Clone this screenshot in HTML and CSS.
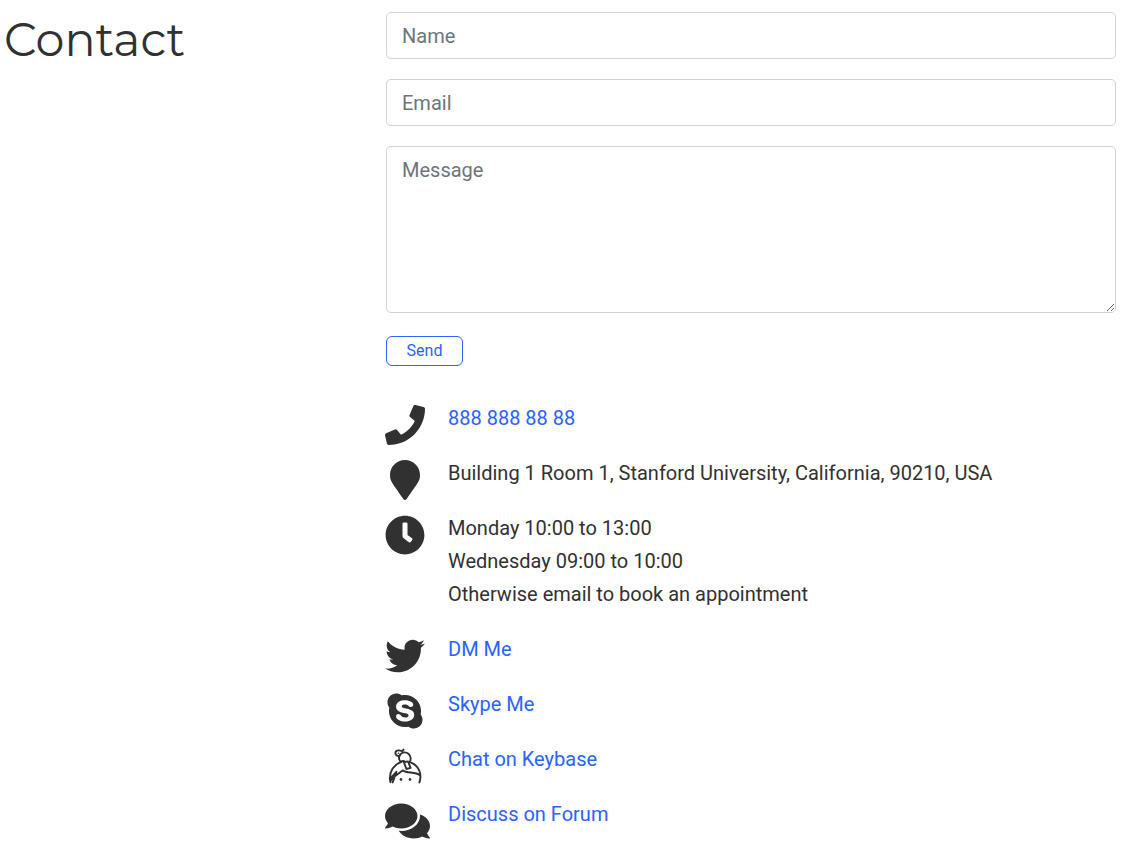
FILE: index.html
```html
<!DOCTYPE html>
<html lang="en">
<head>
<meta charset="utf-8">
<meta name="viewport" content="width=device-width, initial-scale=1">
<title>Contact</title>
<link rel="stylesheet" href="styles.css">
</head>
<body>
<section class="contact">
  <h1 class="contact-title">Contact</h1>
  <div class="contact-body">
    <form class="contact-form">
      <input class="field" type="text" name="name" aria-label="Name" placeholder="Name">
      <input class="field" type="email" name="email" aria-label="Email" placeholder="Email">
      <textarea class="field field-message" name="message" rows="5" aria-label="Message" placeholder="Message"></textarea>
      <button class="send" type="submit">Send</button>
    </form>
    <ul class="details">
      <li class="detail">
        <svg class="icon" viewBox="0 0 512 512" aria-hidden="true"><path d="M493.4 24.6l-104-24c-11.3-2.6-22.9 3.3-27.5 13.9l-48 112c-4.2 9.8-1.4 21.3 6.9 28l60.6 49.6c-36 76.7-98.9 140.5-177.2 177.2l-49.6-60.6c-6.8-8.3-18.2-11.1-28-6.9l-112 48C3.9 366.5-2 378.1.6 389.4l24 104C27.1 504.2 36.7 512 48 512c256.1 0 464-207.5 464-464 0-11.2-7.7-20.9-18.6-23.4z"/></svg>
        <a href="tel:8888888888">888 888 88 88</a>
      </li>
      <li class="detail">
        <svg class="icon" viewBox="-64 0 512 512" aria-hidden="true"><path d="M172.268 501.67C26.97 291.031 0 269.413 0 192 0 85.961 85.961 0 192 0s192 85.961 192 192c0 77.413-26.97 99.031-172.268 309.67-9.535 13.774-29.93 13.773-39.464 0z"/></svg>
        <span>Building 1 Room 1, Stanford University, California, 90210, USA</span>
      </li>
      <li class="detail">
        <svg class="icon" viewBox="0 0 512 512" aria-hidden="true"><path d="M256,8C119,8,8,119,8,256S119,504,256,504,504,393,504,256,393,8,256,8Zm92.49,313h0l-20,25a16,16,0,0,1-22.49,2.5h0l-67-49.72a40,40,0,0,1-15-31.23V112a16,16,0,0,1,16-16h32a16,16,0,0,1,16,16V256l58,42.5A16,16,0,0,1,348.49,321Z"/></svg>
        <span>Monday 10:00 to 13:00<br>Wednesday 09:00 to 10:00<br>Otherwise email to book an appointment</span>
      </li>
      <li class="detail">
        <svg class="icon" viewBox="0 0 512 512" aria-hidden="true"><path d="M459.37 151.716c.325 4.548.325 9.097.325 13.645 0 138.72-105.583 298.558-298.558 298.558-59.452 0-114.68-17.219-161.137-47.106 8.447.974 16.568 1.299 25.34 1.299 49.055 0 94.213-16.568 130.274-44.832-46.132-.975-84.792-31.188-98.112-72.772 6.498.974 12.995 1.624 19.818 1.624 9.421 0 18.843-1.3 27.614-3.573-48.081-9.747-84.143-51.98-84.143-102.985v-1.299c13.969 7.797 30.214 12.67 47.431 13.319-28.264-18.843-46.781-51.005-46.781-87.391 0-19.492 5.197-37.36 14.294-52.954 51.655 63.675 129.3 105.258 216.365 109.807-1.624-7.797-2.599-15.918-2.599-24.04 0-57.828 46.782-104.934 104.934-104.934 30.213 0 57.502 12.67 76.67 33.137 23.715-4.548 46.456-13.32 66.599-25.34-7.798 24.366-24.366 44.833-46.132 57.827 21.117-2.273 41.584-8.122 60.426-16.243-14.292 20.791-32.161 39.308-52.628 54.253z"/></svg>
        <a href="#twitter">DM Me</a>
      </li>
      <li class="detail">
        <svg class="icon" viewBox="-32 0 512 512" aria-hidden="true"><path d="M424.7 299.8c2.9-14 4.7-28.9 4.7-43.8 0-113.5-91.9-205.3-205.3-205.3-14.9 0-29.7 1.7-43.8 4.7C161.3 40.7 137.7 32 112 32 50.2 32 0 82.2 0 144c0 25.7 8.7 49.3 23.3 68.2-2.9 14-4.7 28.9-4.7 43.8 0 113.5 91.9 205.3 205.3 205.3 14.9 0 29.7-1.7 43.8-4.7 19 14.6 42.6 23.3 68.2 23.3 61.8 0 112-50.2 112-112 .1-25.6-8.6-49.2-23.2-68.1zm-194.6 91.5c-65.6 0-120.5-29.2-120.5-65 0-16 9-30.6 29.5-30.6 31.2 0 34.1 44.9 88.1 44.9 25.7 0 42.3-11.4 42.3-26.3 0-18.7-16-21.6-42-28-62.5-15.4-117.8-22-117.8-87.2 0-59.2 58.6-81.1 109.1-81.1 55.1 0 110.8 21.9 110.8 55.4 0 16.9-11.4 31.8-30.3 31.8-28.3 0-29.2-33.5-75-33.5-25.7 0-42 7-42 22.5 0 19.8 20.8 21.8 69.1 33 41.4 9.3 90.7 26.8 90.7 77.6 0 59.1-57.1 86.5-112 86.5z"/></svg>
        <a href="#skype">Skype Me</a>
      </li>
      <li class="detail">
        <svg class="icon" viewBox="0 0 40 40" aria-hidden="true">
          <g fill="none" stroke="currentColor" stroke-width="1.9" stroke-linejoin="round" stroke-linecap="round">
            <path d="M4.9 33C4.6 25 8.8 18.6 15.8 16.2M26 16.6C32.8 19.2 37.6 27 34.4 36.4"/>
            <path d="M4.9 33L11.4 25.8L10.2 30L17.6 24.4C22.5 27.6 30 25.4 35 29.2M4.9 33L5.4 36.2M7.6 36.4L9.4 32"/>
            <path d="M15.8 16.2C13.6 13.6 13.5 10.6 15.3 8.4C17.2 6 21 5.6 23.4 7.8C26.3 10.4 26.3 14.2 24.2 16.6M15.8 16.2C17 15 18.3 14.7 19.6 15.4"/>
            <path d="M18.9 16.2L23 15.4L25.6 21.8L21.4 23Z"/>
            <path d="M14.8 9.6C12.4 10.4 10.4 9.2 10.4 7C10.4 5 12 4.2 14 4.4L17.4 5.2L18.5 3.6"/>
          </g>
          <path d="M5 33L11.4 25.8L10.4 29.4L8.4 33.6L5.6 36Z"/>
          <circle cx="16" cy="33.4" r="1.3"/>
          <circle cx="25" cy="33.4" r="1.3"/>
          <circle cx="13.5" cy="7.2" r="0.8"/>
        </svg>
        <a href="#keybase">Chat on Keybase</a>
      </li>
      <li class="detail">
        <svg class="icon icon-wide" viewBox="0 0 576 512" aria-hidden="true"><path d="M416 192c0-88.4-93.1-160-208-160S0 103.6 0 192c0 34.3 14.1 65.9 38 92-13.4 30.2-35.5 54.2-35.8 54.5-2.2 2.3-2.8 5.7-1.5 8.7S4.8 352 8 352c36.6 0 66.9-12.3 88.7-25 32.2 15.7 70.3 25 111.3 25 114.9 0 208-71.6 208-160zm122 220c23.9-26 38-57.7 38-92 0-66.9-53.5-124.2-129.3-148.1.9 6.6 1.3 13.3 1.3 20.1 0 105.9-107.7 192-240 192-10.8 0-21.3-.8-31.7-1.9C207.8 439.6 281.8 480 368 480c41 0 79.1-9.2 111.3-25 21.8 12.7 52.1 25 88.7 25 3.2 0 6.1-1.9 7.3-4.8 1.3-2.9.7-6.3-1.5-8.7-.3-.2-22.4-24.2-35.8-54.5z"/></svg>
        <a href="#forum">Discuss on Forum</a>
      </li>
    </ul>
  </div>
</section>
</body>
</html>
```
FILE: styles.css
```css
*, *::before, *::after { box-sizing: border-box; }

body {
  margin: 0;
  background: #fff;
  color: #313131;
  font-family: Roboto, "Liberation Sans", sans-serif;
  font-size: 20px;
  line-height: 33px;
}

.contact {
  display: grid;
  grid-template-columns: 1fr 2fr;
  column-gap: 17px;
  padding: 12px 13px 20px 4px;
}

.contact-title {
  margin: 0;
  font-family: Montserrat, Lato, sans-serif;
  font-size: 46px;
  font-weight: 400;
  line-height: 56px;
}

.contact-form {
  display: flex;
  flex-direction: column;
  align-items: flex-start;
  gap: 20px;
}

.field {
  display: block;
  width: 100%;
  height: 47px;
  padding: 7px 15px;
  border: 1px solid #ced4da;
  border-radius: 5px;
  background: #fff;
  color: #495057;
  font: inherit;
  line-height: 31px;
}

.field::placeholder { color: #6c757d; opacity: 1; }

.field-message {
  height: 167px;
  padding-top: 8px;
  resize: vertical;
}

.send {
  height: 30px;
  min-width: 77px;
  margin-top: 3px;
  padding: 0 19px;
  border: 1px solid #2962ff;
  border-radius: 6px;
  background: transparent;
  color: #2962ff;
  font: inherit;
  font-size: 16px;
  line-height: 28px;
}

.details {
  display: flex;
  flex-direction: column;
  gap: 22px;
  margin: 36px 0 0;
  padding: 0;
  list-style: none;
}

.detail {
  display: grid;
  grid-template-columns: 62px 1fr;
}

.icon {
  width: 40px;
  height: 40px;
  margin: 3px 0 -10px -1px;
  fill: currentColor;
}

.icon-wide { width: 45px; }

a {
  justify-self: start;
  color: #2962ff;
  text-decoration: none;
}
```
